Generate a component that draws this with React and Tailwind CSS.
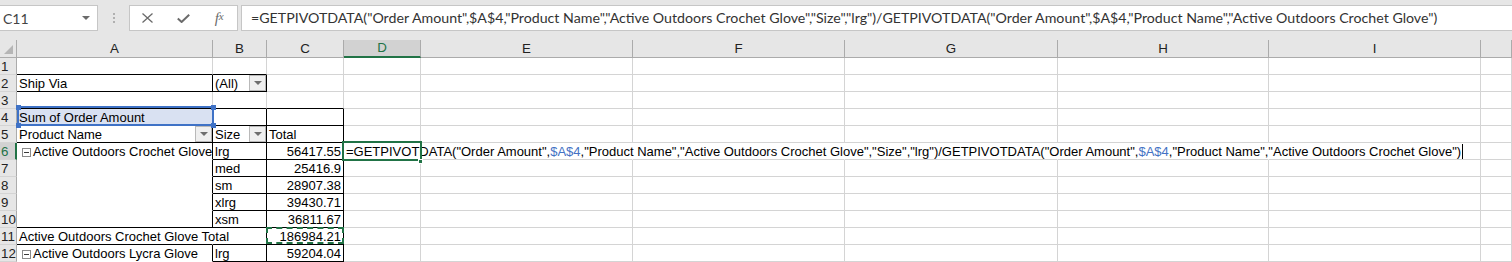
import React from "react";

const FORMULA =
  '=GETPIVOTDATA("Order Amount",$A$4,"Product Name","Active Outdoors Crochet Glove","Size","lrg")/GETPIVOTDATA("Order Amount",$A$4,"Product Name","Active Outdoors Crochet Glove")';

const COLS = ["A", "B", "C", "D", "E", "F", "G", "H", "I", "J"];
const ROWS = [1, 2, 3, 4, 5, 6, 7, 8, 9, 10, 11, 12];

// pivot table borders, by column -> rows
const blackRight = {
  A: [2, 4, 5, 6, 7, 8, 9, 10, 12],
  B: [2, 4, 5, 6, 7, 8, 9, 10, 11, 12],
  C: [4, 5, 6, 7, 8, 9, 10, 11, 12],
};
const blackBottom = {
  A: [1, 2, 3, 4, 5, 10, 11],
  B: [1, 2, 3, 4, 5, 6, 7, 8, 9, 10, 11, 12],
  C: [3, 4, 5, 6, 7, 8, 9, 10, 11, 12],
};
const noRight = { A: [11], E: [6], F: [6], G: [6], H: [6] };
const noBottom = { A: [6, 7, 8, 9, 12] };

const data = {
  A2: { text: "Ship Via" },
  B2: { text: "(All)", drop: true },
  A4: { text: "Sum of Order Amount", ref: true },
  A5: { text: "Product Name", drop: true },
  B5: { text: "Size", drop: true },
  C5: { text: "Total" },
  A6: { text: "Active Outdoors Crochet Glove", toggle: true },
  B6: { text: "lrg" },
  C6: { text: "56417.55", num: true },
  D6: { active: true },
  B7: { text: "med" },
  C7: { text: "25416.9", num: true },
  B8: { text: "sm" },
  C8: { text: "28907.38", num: true },
  B9: { text: "xlrg" },
  C9: { text: "39430.71", num: true },
  B10: { text: "xsm" },
  C10: { text: "36811.67", num: true },
  A11: { text: "Active Outdoors Crochet Glove Total", spill: true },
  C11: { text: "186984.21", num: true, copy: true },
  A12: { text: "Active Outdoors Lycra Glove", toggle: true },
  B12: { text: "lrg" },
  C12: { text: "59204.04", num: true },
};

const rightCls = (col, row) => {
  if (noRight[col]?.includes(row)) return "border-r-transparent";
  if (blackRight[col]?.includes(row)) return "border-r-black";
  return "border-r-[#d4d4d4]";
};

const bottomCls = (col, row) => {
  if (noBottom[col]?.includes(row)) return "border-b-transparent";
  if (blackBottom[col]?.includes(row)) return "border-b-black";
  return "border-b-[#d4d4d4]";
};

const Caret = ({ color = "#6b6b6b" }) => (
  <svg width="8" height="4" viewBox="0 0 8 4">
    <path d="M0 0h8L4 4z" fill={color} />
  </svg>
);

const DropButton = () => (
  <div className="absolute right-0 top-0 flex h-[16px] w-[17px] items-center justify-center border border-[#b9b9b9] bg-[#efefef]">
    <Caret color="#6e6e6e" />
  </div>
);

const FormulaInCell = () => {
  const parts = FORMULA.split("$A$4");
  return (
    <span className="flex items-center whitespace-nowrap">
      {parts.map((p, i) => (
        <React.Fragment key={i}>
          {p}
          {i < parts.length - 1 && <span className="text-[#4472c4]">$A$4</span>}
        </React.Fragment>
      ))}
      <span className="ml-[1px] inline-block h-[15px] w-px bg-black" />
    </span>
  );
};

const Cell = ({ col, row }) => {
  const d = data[col + row] || {};
  const lifted = d.spill || d.active || d.ref || d.copy;
  return (
    <div
      className={`relative h-[17px] border-r border-b ${rightCls(col, row)} ${bottomCls(col, row)} ${
        d.ref ? "bg-[#d9e1f2] z-20" : "bg-white"
      } ${lifted && !d.ref ? "z-10" : ""} ${lifted ? "" : "overflow-hidden"}`}
    >
      <div
        className={`flex h-full items-start whitespace-nowrap pt-px leading-[15px] ${
          d.num ? "justify-end pr-[2px]" : "pl-[2px]"
        }`}
      >
        {d.toggle && (
          <span className="mr-[2px] ml-[3px] mt-[4px] flex h-[9px] w-[9px] shrink-0 items-center justify-center border border-[#8a8a8a] bg-white">
            <span className="h-px w-[5px] bg-[#3a3a3a]" />
          </span>
        )}
        {d.active ? <FormulaInCell /> : d.text}
      </div>
      {d.drop && <DropButton />}
      {d.ref && (
        <div className="absolute left-0 -top-[3px] -right-[2px] -bottom-px border-2 border-[#3f72c6]">
          <span className="absolute -left-[3px] -top-[3px] h-[5px] w-[5px] bg-[#3f72c6]" />
          <span className="absolute -right-[4px] -top-[3px] h-[5px] w-[5px] bg-[#3f72c6]" />
          <span className="absolute -left-[3px] -bottom-[4px] h-[5px] w-[5px] bg-[#3f72c6]" />
          <span className="absolute -right-[4px] -bottom-[4px] h-[5px] w-[5px] bg-[#3f72c6]" />
        </div>
      )}
      {d.active && (
        <div className="absolute -left-[2px] -top-[2px] h-[20px] w-[80px] border-2 border-[#217346]">
          <span className="absolute -right-[3px] -bottom-[5px] h-[5px] w-[5px] border border-white bg-[#217346]" />
        </div>
      )}
      {d.copy && (
        <div className="absolute -left-px -top-px -right-px bottom-0 border-2 border-dashed border-[#217346]" />
      )}
    </div>
  );
};

const FormulaBar = () => (
  <div className="flex h-[38px] items-start pt-[5px]">
    <div className="flex h-[26px] w-[98px] items-center justify-between border border-l-0 border-[#c6c6c6] bg-white pl-[3px] pr-[7px] font-['Lato',sans-serif] text-[14px] text-[#444]">
      <span>C11</span>
      <Caret />
    </div>
    <div className="flex h-[26px] w-[31px] items-center justify-center">
      <svg width="2" height="10" viewBox="0 0 2 10">
        <rect x="0" y="0" width="2" height="2" fill="#b0b0b0" />
        <rect x="0" y="4" width="2" height="2" fill="#b0b0b0" />
        <rect x="0" y="8" width="2" height="2" fill="#b0b0b0" />
      </svg>
    </div>
    <div className="flex h-[26px] w-[109px] items-center border border-[#c6c6c6] bg-white">
      <span className="flex w-[36px] justify-center">
        <svg width="11" height="10" viewBox="0 0 11 10">
          <path d="M0.5 0.5L10.5 9.5M10.5 0.5L0.5 9.5" stroke="#6b6b6b" strokeWidth="1.3" fill="none" />
        </svg>
      </span>
      <span className="flex w-[36px] justify-center pt-px">
        <svg width="13" height="9" viewBox="0 0 13 9">
          <path d="M0.8 4.5L4.6 8L12.2 0.8" stroke="#6b6b6b" strokeWidth="2" fill="none" />
        </svg>
      </span>
      <span className="flex w-[36px] justify-center font-['Liberation_Serif',serif] text-[15px] italic leading-none text-[#6b6b6b]">
        f<span className="text-[11px]">x</span>
      </span>
    </div>
    <div className="ml-[3px] flex h-[26px] flex-1 items-center overflow-hidden whitespace-nowrap border border-r-0 border-[#c6c6c6] bg-white pl-[9px] font-['Lato',sans-serif] text-[14.2px] text-[#333]">
      {FORMULA}
    </div>
  </div>
);

export default function App() {
  return (
    <div className="h-[262px] w-[1512px] overflow-hidden bg-[#e6e6e6] font-['Liberation_Sans',Arial,sans-serif] text-[13px] text-black">
      <FormulaBar />
      <div className="grid grid-cols-[17px_196px_54px_77px_77px_212px_212px_213px_211px_212px_1fr]">
        <div className="relative mt-[2px] h-[18px] border-r border-b border-[#ababab]">
          <svg className="absolute right-[3px] bottom-[3px]" width="9" height="9" viewBox="0 0 9 9">
            <path d="M9 0V9H0z" fill="#b5b5b5" />
          </svg>
        </div>
        {COLS.map((c) => (
          <div
            key={c}
            className={`mt-[2px] flex h-[18px] items-center justify-center border-r border-[#ababab] text-[13.33px] ${
              c === "D"
                ? "border-b-2 border-b-[#217346] bg-[#d2d2d2] text-[#217346]"
                : "border-b text-[#222]"
            }`}
          >
            {c === "J" ? "" : c}
          </div>
        ))}
        {ROWS.map((r) => (
          <React.Fragment key={r}>
            <div
              className={`h-[17px] border-b border-b-[#d4d4d4] pl-px pt-px text-[13.33px] leading-[15px] ${
                r === 6
                  ? "border-r-2 border-r-[#217346] bg-[#d2d2d2] text-[#217346]"
                  : "border-r border-r-[#ababab] text-[#222]"
              }`}
            >
              {r}
            </div>
            {COLS.map((c) => (
              <Cell key={c} col={c} row={r} />
            ))}
          </React.Fragment>
        ))}
      </div>
    </div>
  );
}
